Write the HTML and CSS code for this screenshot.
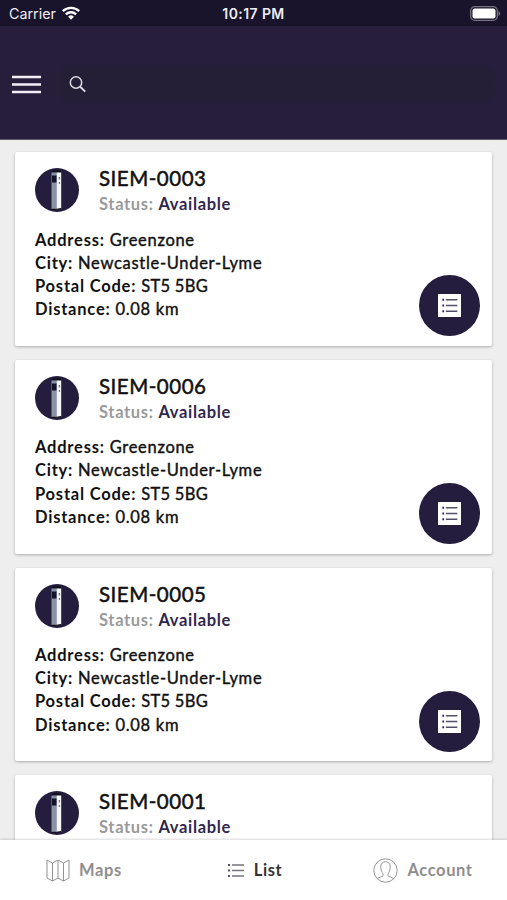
FILE: index.html
```html
<!DOCTYPE html>
<html lang="en">
<head>
<meta charset="utf-8">
<title>Stations</title>
<link rel="stylesheet" href="styles.css">
</head>
<body>
<svg class="defs" width="0" height="0" aria-hidden="true">
  <symbol id="station" viewBox="0 0 44 44">
    <circle cx="22" cy="22" r="22" fill="#251d3d"/>
    <path d="M16.500 4l1.500-2h8l.5 2.500z" fill="#15111f"/>
    <path d="M16.500 4.500h5v36.500h-5z" fill="#8793a7"/>
    <path d="M21.500 4.500h4.700v36l-4.700.8z" fill="#f5f6fa"/>
    <path d="M17 7.500h4.500v7H17z" fill="#11152d"/>
    <path d="M24.300 9v2.500M24.300 14v2" stroke="#555566" stroke-width="1"/>
    <path d="M16.500 41.300h5l4.500-.8" stroke="#111" fill="none"/>
  </symbol>
  <symbol id="details" viewBox="0 0 22 22">
    <path d="M0 0h22v22H0z" fill="#fff"/>
    <path d="M7.500 5.500h11M7.500 11h11M7.500 16.500h11" stroke="#55506a" stroke-width="1.200"/>
    <path d="M4.200 5.500h1.600M4.200 11h1.600M4.200 16.500h1.600" stroke="#251d3d" stroke-width="1.700"/>
  </symbol>
</svg>
<div class="app">
  <header class="header">
    <div class="status-bar">
      <div class="carrier"><span>Carrier</span>
        <svg width="18" height="14" viewBox="0 0 18 14"><g fill="none" stroke="#fff" stroke-width="2.400"><path d="M.8 5.200a11.800 11.800 0 0 1 16.400 0"/><path d="M3.900 8.400a7.300 7.300 0 0 1 10.200 0"/></g><path d="M6.100 10.700a4.200 4.200 0 0 1 5.800 0L9 13.700z" fill="#fff"/></svg>
      </div>
      <span class="time">10:17 PM</span>
      <svg class="battery" width="31" height="15" viewBox="0 0 31 15"><rect x=".7" y=".7" width="26.600" height="13.600" rx="4" fill="none" stroke="#77727f" stroke-width="1.300"/><rect x="2.500" y="2.500" width="23" height="10" rx="2" fill="#fff"/><path d="M28.500 5c2.200.7 2.200 4.300 0 5z" fill="#77727f"/></svg>
    </div>
    <div class="toolbar">
      <svg width="29" height="19" viewBox="0 0 29 19"><path d="M0 2h29M0 9.500h29M0 17h29" stroke="#f2f0f6" stroke-width="2.500"/></svg>
      <div class="search"><svg width="18" height="18" viewBox="0 0 18 18" fill="none" stroke="#dedbe4" stroke-width="1.500"><circle cx="7" cy="7.500" r="5.700"/><path d="M11.200 11.800l5 4.800" stroke-width="1.900"/></svg></div>
    </div>
  </header>
  <main class="list">
    <article class="card">
      <div class="card-head"><svg class="avatar"><use href="#station"/></svg><div><h2>SIEM-0003</h2><p class="status"><span>Status:</span> <b>Available</b></p></div></div>
      <div class="facts"><p><b>Address:</b> Greenzone</p><p><b>City:</b> Newcastle-Under-Lyme</p><p><b>Postal Code:</b> <span class="code">ST5 5BG</span></p><p><b>Distance:</b> 0.08 km</p></div>
      <div class="action"><svg width="23" height="23"><use href="#details"/></svg></div>
    </article>
    <article class="card">
      <div class="card-head"><svg class="avatar"><use href="#station"/></svg><div><h2>SIEM-0006</h2><p class="status"><span>Status:</span> <b>Available</b></p></div></div>
      <div class="facts"><p><b>Address:</b> Greenzone</p><p><b>City:</b> Newcastle-Under-Lyme</p><p><b>Postal Code:</b> <span class="code">ST5 5BG</span></p><p><b>Distance:</b> 0.08 km</p></div>
      <div class="action"><svg width="23" height="23"><use href="#details"/></svg></div>
    </article>
    <article class="card">
      <div class="card-head"><svg class="avatar"><use href="#station"/></svg><div><h2>SIEM-0005</h2><p class="status"><span>Status:</span> <b>Available</b></p></div></div>
      <div class="facts"><p><b>Address:</b> Greenzone</p><p><b>City:</b> Newcastle-Under-Lyme</p><p><b>Postal Code:</b> <span class="code">ST5 5BG</span></p><p><b>Distance:</b> 0.08 km</p></div>
      <div class="action"><svg width="23" height="23"><use href="#details"/></svg></div>
    </article>
    <article class="card">
      <div class="card-head"><svg class="avatar"><use href="#station"/></svg><div><h2>SIEM-0001</h2><p class="status"><span>Status:</span> <b>Available</b></p></div></div>
    </article>
  </main>
  <nav class="tabs">
    <div class="tab maps"><svg width="24" height="23" viewBox="0 0 24 23" fill="none" stroke="#929292" stroke-width="1"><path d="M1 1l5.500 3L12 1l5.500 3L23 1v18l-5.500 3L12 19l-5.500 3L1 19zM6.500 4v18M12 1v18M17.500 4v18"/></svg><span>Maps</span></div>
    <div class="tab active"><svg width="16" height="15" viewBox="0 0 16 15"><path d="M4 2h12M4 7.500h12M4 13h12" stroke="#77737f" stroke-width="1.500"/><path d="M0 2h2M0 7.500h2M0 13h2" stroke="#55515f" stroke-width="2"/></svg><span>List</span></div>
    <div class="tab account"><svg width="25" height="25" viewBox="0 0 25 25" fill="none" stroke="#969696" stroke-width="1"><circle cx="12.500" cy="12.500" r="11.700"/><path d="M4.300 20.700c1.700-1.600 5-1.700 5.700-2.900.5-1.100-.1-2-.8-3.200C8.300 13 7.500 10.300 7.800 8c.3-2.900 2.200-4.200 4.700-4.200s4.400 1.300 4.700 4.200c.3 2.300-.5 5-1.400 6.600-.7 1.200-1.300 2.100-.8 3.200.7 1.200 4 1.300 5.700 2.900"/></svg><span>Account</span></div>
  </nav>
</div>
</body>
</html>
```
FILE: styles.css
```css
* { box-sizing: border-box; }
body { margin: 0; font-family: Lato, "Liberation Sans", sans-serif; }
h2, p { margin: 0; }
svg { display: block; flex: none; }
.defs { position: absolute; }
.app { display: flex; flex-direction: column; height: 900px; overflow: hidden; background: #eeeeee; }
.header { flex: none; height: 140px; background: #261e3b; border-bottom: 1px solid #5d5769; }
.status-bar { display: grid; grid-template-columns: 1fr auto 1fr; align-items: center; height: 26px; padding: 0 6px 0 9px; background: #19132b; color: #eeecf3; font: 14.300px/26px Inter, sans-serif; }
.carrier { display: flex; align-items: center; gap: 6px; height: 28px; }
.carrier svg { margin-top: -2px; }
.time { margin-left: -3px; font-weight: 600; font-size: 14px; height: 28px; line-height: 28px; letter-spacing: .4px; }
.battery { justify-self: end; margin-top: -1px; }
.toolbar { display: flex; align-items: center; gap: 20px; padding: 39px 12px 0; }
.search { flex: 1; display: flex; align-items: center; height: 38px; padding-left: 8px; border-radius: 8px; background: #241e37; }
.list { flex: 1; min-height: 0; overflow: hidden; display: flex; flex-direction: column; gap: 14px; padding: 12.300px 15px 0; }
.card { position: relative; flex: none; height: 193.700px; padding: 16px 20px; border-radius: 2px; background: #fff; box-shadow: 0 1px 3px rgba(0, 0, 0, .28); }
.card-head { display: flex; gap: 20px; height: 60px; }
.avatar { width: 44px; height: 44px; }
h2 { margin-top: -1px; font-size: 20.500px; line-height: 22px; font-weight: 400; letter-spacing: .5px; color: #111; -webkit-text-stroke: .5px #111; }
.status { margin-top: 5px; font-size: 16.500px; line-height: 20px; letter-spacing: .65px; color: #9a9a9a; }
.status span { font-weight: 700; }
.status b { color: #30284d; font-weight: 700; }
.facts { padding-top: .3px; font-size: 16.500px; line-height: 23.200px; letter-spacing: .7px; color: #111; -webkit-text-stroke: .4px #111; }
.facts b { font-weight: 700; letter-spacing: .78px; -webkit-text-stroke: 0; }
.code { letter-spacing: .3px; }
.action { position: absolute; right: 12px; bottom: 9.500px; display: grid; place-items: center; width: 61px; height: 61px; border-radius: 50%; background: #251d3d; }
.tabs { flex: none; display: flex; height: 60px; background: #fff; box-shadow: 0 -1px 2px rgba(0, 0, 0, .15); z-index: 1; color: #8e8e8e; font-size: 16.500px; font-weight: 700; letter-spacing: .6px; }
.tab { flex: 1; display: flex; align-items: center; justify-content: center; }
.tab svg { margin-right: 9px; }
.tab span { margin-top: -1px; }
.active { padding-left: 3px; color: #333; }
.active svg { margin-right: 10px; }
```
